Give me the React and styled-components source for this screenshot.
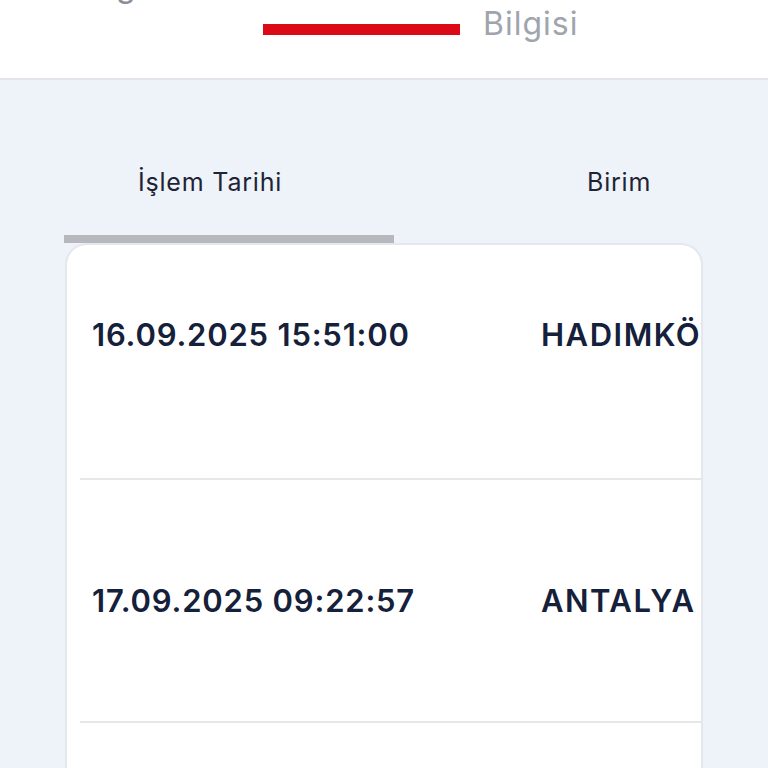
import React from "react";
import styled, { createGlobalStyle } from "styled-components";

const GlobalStyle = createGlobalStyle`
  html, body {
    margin: 0;
    padding: 0;
    background: #eef2f9;
    font-family: Inter, "Noto Sans", sans-serif;
    overflow: hidden;
  }
`;

const StyledHeader = styled.header`
  height: 78px;
  background: #ffffff;
  border-bottom: 2px solid #e2e5ea;
  overflow: hidden;
`;

const StyledHeaderInner = styled.div`
  display: flex;
  flex-direction: column;
  gap: 6px;
  margin-top: -30px;
`;

const StyledTabLabel = styled.span`
  display: block;
  font-size: 32px;
  line-height: 32px;
  letter-spacing: 1px;
  color: ${({ $muted }) => ($muted ? "#a0a4ad" : "#8c8f96")};
  white-space: nowrap;
`;

const StyledTabRow = styled.div`
  display: flex;
  align-items: baseline;
  gap: 23px;
  padding-left: ${({ $indent }) => $indent}px;
`;

const StyledActiveBar = styled.div`
  width: 197px;
  height: 11px;
  background: #dc0a16;
`;

const StyledMain = styled.main`
  padding: 86px 0 0 64px;
`;

const StyledColumns = styled.div`
  display: flex;
`;

const StyledColumnHead = styled.div`
  width: ${({ $width }) => $width}px;
  padding-left: ${({ $pad }) => $pad}px;
  box-sizing: border-box;
  font-size: 25px;
  line-height: 32px;
  letter-spacing: 0.8px;
  color: #1e2435;
  white-space: nowrap;
`;

const StyledSortBar = styled.div`
  width: 330px;
  height: 8px;
  margin-top: 37px;
  background: #b6b8bd;
`;

const StyledCard = styled.div`
  width: 638px;
  margin-left: 1px;
  box-sizing: border-box;
  background: #ffffff;
  border: 2px solid #e4e7ec;
  border-bottom: none;
  border-radius: 22px 22px 0 0;
  overflow: hidden;
`;

const StyledRow = styled.div`
  display: flex;
  align-items: center;
  margin-left: 13px;
  padding: ${({ $top }) => $top}px 0 ${({ $bottom }) => $bottom}px 12px;
  border-bottom: 2px solid #e5e7eb;
`;

const StyledCell = styled.div`
  flex: 0 0 auto;
  width: ${({ $width }) => ($width ? `${$width}px` : "auto")};
  font-size: 31px;
  line-height: 38px;
  font-weight: 600;
  letter-spacing: ${({ $spacing }) => $spacing}px;
  color: #15203a;
  white-space: nowrap;
`;

const rows = [
  { date: "16.09.2025 15:51:00", unit: "HADIMKÖY", top: 71, bottom: 124 },
  { date: "17.09.2025 09:22:57", unit: "ANTALYA", top: 102, bottom: 101 },
  { date: "18.09.2025 11:04:12", unit: "ANTALYA", top: 102, bottom: 101 },
];

const App = () => {
  return (
    <>
      <GlobalStyle />
      <StyledHeader>
        <StyledHeaderInner>
          <StyledTabRow $indent={62}>
            <StyledTabLabel>Kargo</StyledTabLabel>
          </StyledTabRow>
          <StyledTabRow $indent={263}>
            <StyledActiveBar />
            <StyledTabLabel $muted>Bilgisi</StyledTabLabel>
          </StyledTabRow>
        </StyledHeaderInner>
      </StyledHeader>
      <StyledMain>
        <StyledColumns>
          <StyledColumnHead $width={330} $pad={74}>
            İşlem Tarihi
          </StyledColumnHead>
          <StyledColumnHead $width={300} $pad={193}>
            Birim
          </StyledColumnHead>
        </StyledColumns>
        <StyledSortBar />
        <StyledCard>
          {rows.map((row) => (
            <StyledRow key={row.date} $top={row.top} $bottom={row.bottom}>
              <StyledCell $width={449} $spacing={0.8}>
                {row.date}
              </StyledCell>
              <StyledCell $spacing={1.5}>{row.unit}</StyledCell>
            </StyledRow>
          ))}
        </StyledCard>
      </StyledMain>
    </>
  );
};

export default App;
